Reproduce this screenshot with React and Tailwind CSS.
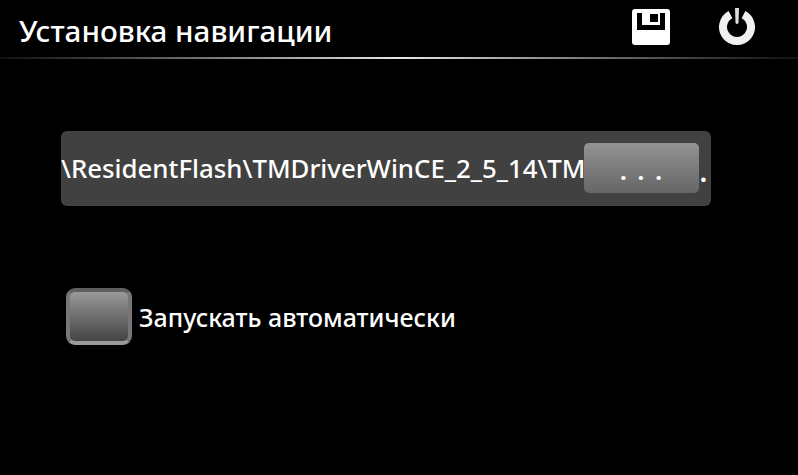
import React from "react";

const font = { fontFamily: '"Noto Sans", sans-serif' };

function SaveIcon() {
  return (
    <svg width="40" height="38" viewBox="0 0 40 38">
      <path
        fillRule="evenodd"
        fill="#ffffff"
        d="M4 1H36Q39 1 39 4V34Q39 37 36 37H4Q1 37 1 34V4Q1 1 4 1ZM6 5V22H34V5H29V17H11V5ZM19 6V14H27V6Z"
      />
    </svg>
  );
}

function PowerIcon() {
  return (
    <svg width="38" height="38" viewBox="0 0 38 38">
      <path
        d="M12.5 6.6A14 14 0 1 0 25.5 6.6"
        fill="none"
        stroke="#f0f0f0"
        strokeWidth="8"
      />
      <path d="M17 0H21L20.5 15Q19 17 17.5 15Z" fill="#dddddd" />
    </svg>
  );
}

export default function App() {
  return (
    <div className="w-[798px] h-[475px] bg-black text-white overflow-hidden" style={font}>
      <div className="h-[57px] flex items-center pl-[19px] relative">
        <h1 className="text-[29.6px] font-medium leading-none mt-[4px] whitespace-nowrap">
          Установка навигации
        </h1>
        <div className="ml-auto flex items-start gap-[47px] pr-[42px] self-start pt-[8px]">
          <SaveIcon />
          <PowerIcon />
        </div>
      </div>
      <div className="h-[2px] bg-gradient-to-r from-[#111111] via-[#e8e8e8] to-[#111111]" />

      <div className="ml-[61px] mt-[72px] w-[650px] h-[75px] bg-[#414141] rounded-[6px] relative flex items-center overflow-hidden">
        <span className="text-[25.8px] font-medium whitespace-nowrap">\ResidentFlash\TMDriverWinCE_2_5_14\TM</span>
        <span className="absolute right-[4px] top-[26px] text-[26px] leading-[30px] font-bold">.</span>
        <button className="absolute left-[523px] top-[12px] w-[115px] h-[50px] rounded-[5px] bg-gradient-to-b from-[#939393] to-[#666666] text-[24px] font-bold tracking-[11px] pt-[6px] pl-[10px]">
          ...
        </button>
      </div>

      <div className="ml-[66px] mt-[82px] flex items-center gap-[7px]">
        <div className="w-[66px] h-[57px] rounded-[9px] border-[4px] border-t-[#606060] border-l-[#777777] border-r-[#777777] border-b-[#9a9a9a] bg-gradient-to-b from-[#9a9a9a] to-[#454545]" />
        <span className="text-[25px] font-medium whitespace-nowrap mt-[3px]">Запускать автоматически</span>
      </div>
    </div>
  );
}
